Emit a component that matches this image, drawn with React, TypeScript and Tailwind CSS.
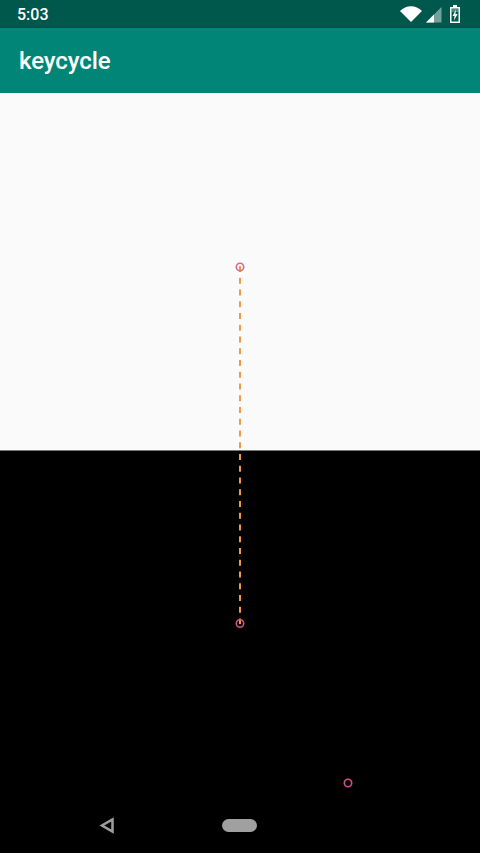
export default function App() {
  return (
    <div className="relative flex h-[853px] w-[480px] flex-col overflow-hidden bg-black font-['Roboto',sans-serif]">
      <div className="flex h-[28px] items-center justify-between bg-[#00574b] pl-[17px] pr-[20px]">
        <span className="mt-[2px] text-[16px] font-medium leading-none text-white">5:03</span>
        <div className="flex items-center gap-[4px]">
          <svg width="22" height="16" viewBox="0 0 22 16" className="-mt-[1px]">
            <path d="M0 5 C6 -1.5 16 -1.5 22 5 L11 16 Z" fill="#fff" />
          </svg>
          <svg width="16" height="16" viewBox="0 0 16 16" className="mt-[2px]">
            <path d="M0 15.5 L15.5 0 V15.5 Z" fill="#fff" fillOpacity="0.45" />
            <path d="M0 15.5 L8 7.5 V15.5 Z" fill="#fff" />
          </svg>
          <svg width="10" height="18" viewBox="0 0 10 18" className="ml-[4px]">
            <path fillRule="evenodd" d="M3 0 H7 V2 H10 V18 H0 V2 H3 Z M1.5 3.5 V16.5 H8.5 V3.5 Z" fill="#fff" />
            <path d="M1.5 3.5 H8.5 V7 H1.5 Z" fill="#fff" fillOpacity="0.3" />
            <path d="M6 4.5 L2.5 11 H4.5 L4 15.5 L7.6 9 H5.4 Z" fill="#fff" />
          </svg>
        </div>
      </div>
      <div className="flex h-[65px] items-center bg-[#008577] pl-[19px] shadow-[0_1px_3px_rgba(0,0,0,0.25)]">
        <span className="text-[24px] font-medium leading-none tracking-[-0.1px] text-white">keycycle</span>
      </div>
      <div className="h-[358px] border-b border-[#777777] bg-[#fafafa]" />
      <div className="flex-1 bg-black" />
      <svg className="absolute left-0 top-0" width="480" height="853" viewBox="0 0 480 853">
        <line x1="240" y1="266" x2="240" y2="624" stroke="#ec9c48" strokeWidth="2" strokeDasharray="6 5.75" />
        <circle cx="240" cy="267" r="3.7" fill="none" stroke="#d86a8c" strokeWidth="1.6" />
        <circle cx="240" cy="623.5" r="3.7" fill="none" stroke="#d8508a" strokeWidth="1.6" />
        <circle cx="348" cy="783" r="3.7" fill="none" stroke="#d8508a" strokeWidth="1.6" />
        <path d="M112.5 819.5 V831.5 L102 825.5 Z" fill="none" stroke="#9e9e9e" strokeWidth="2.5" />
        <rect x="222" y="819" width="35" height="13" rx="6.5" fill="#a0a0a0" />
      </svg>
    </div>
  );
}
